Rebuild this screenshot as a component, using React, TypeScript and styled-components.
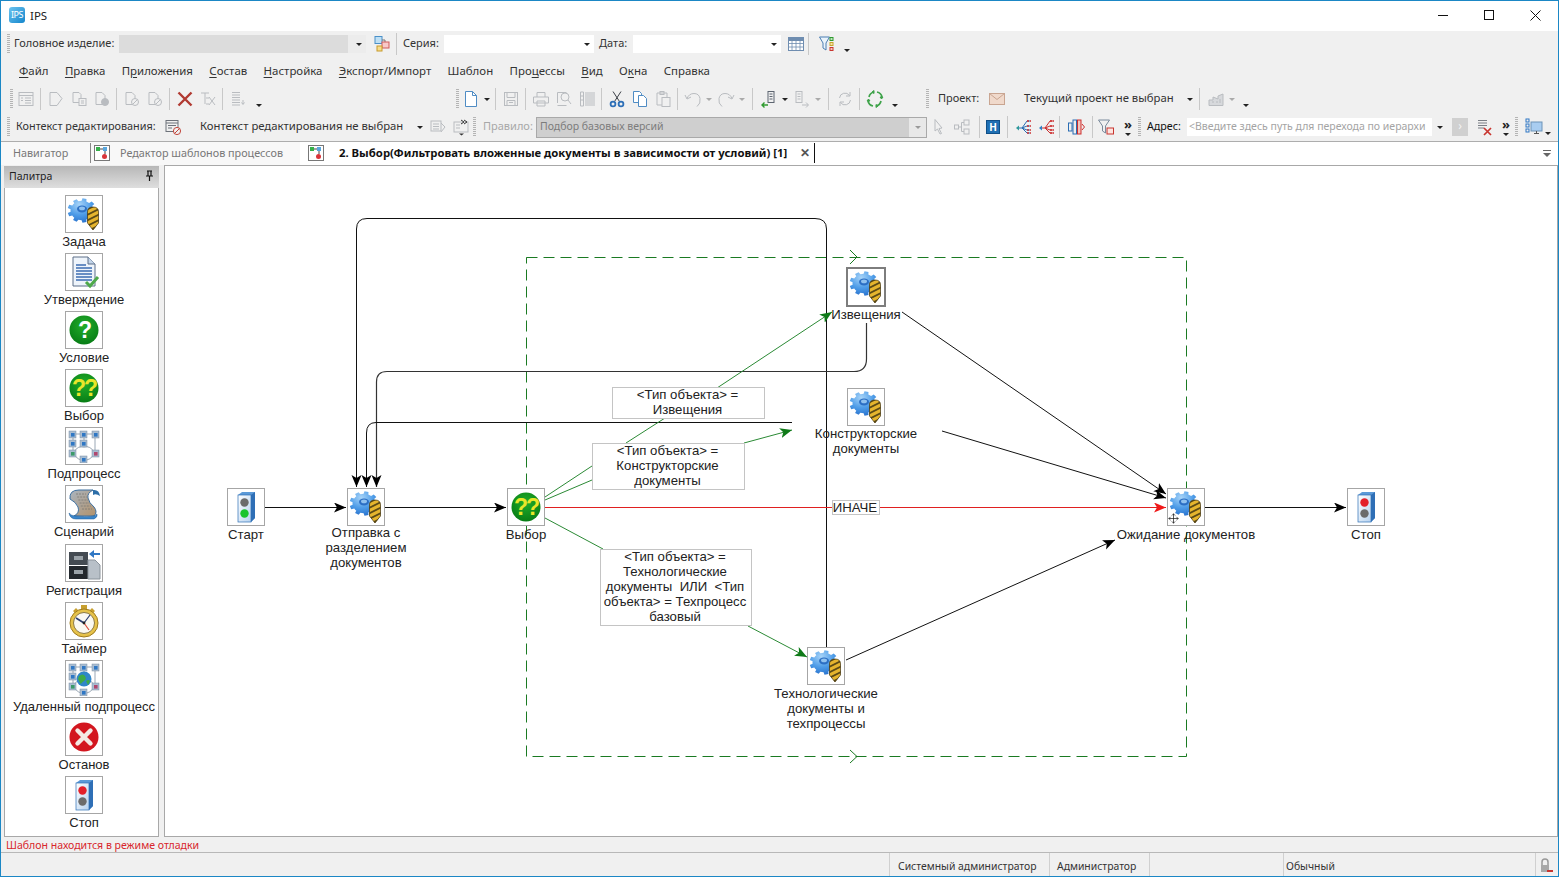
import React, { useId } from 'react';
import { createGlobalStyle, styled } from 'styled-components';
import { Move } from 'lucide-react';

const GlobalStyle = createGlobalStyle`
  html, body { margin: 0; padding: 0; background: #f0f0f0; overflow: hidden; }
  * { box-sizing: border-box; }
`;

const UI_FONT = `"Noto Sans", "Liberation Sans", sans-serif`;
const DIAGRAM_FONT = `"Liberation Sans", Arial, sans-serif`;

/* ---------- drawings ---------- */

function gearPoints(cx: number, cy: number, outer: number, inner: number, teeth: number) {
  const pts: string[] = [];
  const step = (Math.PI * 2) / teeth;
  for (let i = 0; i < teeth; i++) {
    const a = i * step;
    const add = (r: number, da: number) =>
      pts.push(`${(cx + Math.cos(a + da) * r).toFixed(2)},${(cy + Math.sin(a + da) * r * 0.84).toFixed(2)}`);
    add(inner, -step * 0.5);
    add(inner, -step * 0.3);
    add(outer, -step * 0.2);
    add(outer, step * 0.2);
    add(inner, step * 0.3);
  }
  return pts.join(' ');
}

const DRILL = 'M20.5 15q0-5 5.5-5t5.5 5v11l-5.5 7-5.5-7z';

function GearIcon() {
  const id = useId();
  return (
    <svg width="34" height="34" viewBox="0 0 34 34">
      <defs>
        <radialGradient id={id + 'g'} cx="0.4" cy="0.25" r="0.85">
          <stop offset="0" stopColor="#a6d3f8" />
          <stop offset="0.5" stopColor="#4f9de8" />
          <stop offset="1" stopColor="#2069c8" />
        </radialGradient>
        <clipPath id={id + 'c'}>
          <path d={DRILL} />
        </clipPath>
      </defs>
      <polygon points={gearPoints(15, 13.5, 14.5, 11.5, 9)} fill={`url(#${id}g)`} />
      <ellipse cx="15" cy="12" rx="5" ry="3.4" fill="#2c6fc4" />
      <ellipse cx="15" cy="11.4" rx="3" ry="1.8" fill="#8fc1ee" />
      <g clipPath={`url(#${id}c)`}>
        <rect x="19" y="9" width="14" height="25" fill="#e6b52e" />
        {[6, 11.5, 17, 22.5, 28].map((y) => (
          <line key={y} x1="19" y1={y + 7} x2="33" y2={y} stroke="#5c4a16" strokeWidth="1.9" />
        ))}
      </g>
      <path d={DRILL} fill="none" stroke="#3d3010" strokeWidth=".7" />
    </svg>
  );
}

function LightIcon({ top, bottom }: { top: string; bottom: string }) {
  const id = useId();
  return (
    <svg width="34" height="34" viewBox="0 0 34 34">
      <defs>
        <linearGradient id={id} x1="0" y1="0" x2="1" y2="1">
          <stop offset="0" stopColor="#ffffff" />
          <stop offset="1" stopColor="#b7d3f0" />
        </linearGradient>
      </defs>
      <path d="M9 5l4-3h13v26l-4 4z" fill="#5b9ad8" />
      <path d="M22 5l4-3v26l-4 4z" fill="#2f6fb6" />
      <rect x="9" y="5" width="13" height="27" fill={`url(#${id})`} stroke="#2f6fb6" strokeWidth=".7" />
      <circle cx="15.5" cy="12.5" r="4.2" fill={top} />
      <circle cx="15.5" cy="23.5" r="4.2" fill={bottom} />
    </svg>
  );
}

function QuestionIcon({ text, color }: { text: string; color: string }) {
  const id = useId();
  return (
    <svg width="32" height="32" viewBox="0 0 32 32">
      <defs>
        <radialGradient id={id} cx="0.5" cy="0.35" r="0.7">
          <stop offset="0" stopColor="#22ad2a" />
          <stop offset="1" stopColor="#067a14" />
        </radialGradient>
      </defs>
      <circle cx="16" cy="16" r="14.5" fill={`url(#${id})`} />
      <text x="16" y="24" textAnchor="middle" fontFamily={DIAGRAM_FONT} fontWeight="700" fontSize="23" fill={color} letterSpacing="-2">
        {text}
      </text>
    </svg>
  );
}

function DocIcon() {
  return (
    <svg width="34" height="34" viewBox="0 0 34 34">
      <path d="M6 2h15l7 7v22H6z" fill="#eef4fb" stroke="#5d6f88" />
      <path d="M21 2v7h7" fill="#c3d5ea" stroke="#5d6f88" />
      {[10, 13, 16, 19, 22, 25].map((y) => (
        <line key={y} x1="9" y1={y} x2={y < 13 ? 19 : 25} y2={y} stroke="#2e62ad" strokeWidth="1.4" />
      ))}
      <path d="M19 27l4 4 8-9" fill="none" stroke="#4ea94a" strokeWidth="3" />
    </svg>
  );
}

function Square({ x, y, c = '#2f77c4' }: { x: number; y: number; c?: string }) {
  return (
    <g>
      <rect x={x} y={y} width="7" height="7" fill="#a9bdd2" stroke="#7c8ea3" strokeWidth=".5" />
      <rect x={x + 2} y={y + 2} width="3.6" height="3.6" fill={c} />
    </g>
  );
}

function SubprocessIcon({ globe }: { globe?: boolean }) {
  return (
    <svg width="34" height="34" viewBox="0 0 34 34">
      <path d="M6 5H28V24M6 5V24M17 5V14M6 24Q11 16 17 18Q23 16 28 24M6 24Q11 32 17 31Q23 32 28 24" fill="none" stroke="#9aa7b5" />
      <Square x={2} y={2} />
      <Square x={13} y={2} />
      <Square x={25} y={2} />
      <Square x={2} y={11} />
      <Square x={13} y={11} />
      <Square x={2} y={21} c="#3c9a6b" />
      <Square x={25} y={21} c="#b0486e" />
      <Square x={13} y={27} />
      {globe && (
        <g>
          <circle cx="17" cy="17" r="7.5" fill="#2f86c9" />
          <path d="M12 14q4-3 6 0t-1 5-3 3-3-5zM19 19q3-2 4 0l-2 4z" fill="#3faa47" />
        </g>
      )}
    </svg>
  );
}

function ScenarioIcon() {
  const id = useId();
  return (
    <svg width="34" height="34" viewBox="0 0 34 34">
      <defs>
        <linearGradient id={id} x1="0" y1="0" x2="1" y2="1">
          <stop offset="0" stopColor="#a9b4c0" />
          <stop offset="1" stopColor="#b3926a" />
        </linearGradient>
      </defs>
      <path d="M3 12Q2 3 12 3H26Q20 6 21 11Q22 16 27 20Q31 25 27 29H7Q13 26 11 20Q9 15 3 12z" fill={`url(#${id})`} stroke="#3d6f9f" />
      {[7, 10, 13, 16, 19, 22].map((y) => (
        <line key={y} x1={9 + (y - 7) * 0.4} y1={y} x2={19 + (y - 7) * 0.4} y2={y} stroke="#7b7a74" strokeWidth=".8" strokeDasharray="2 1" />
      ))}
      <path d="M2 26Q3 32 9 32H27Q31 30 30 27Q28 31 9 29Q4 29 2 26z" fill="#3a85c9" stroke="#1f5a95" strokeWidth=".5" />
      <path d="M26 3Q32 2 33 9Q29 6 26 8z" fill="#2c6ea8" />
    </svg>
  );
}

function RegistrationIcon() {
  return (
    <svg width="34" height="34" viewBox="0 0 34 34">
      <rect x="2" y="6" width="19" height="13" fill="#444b52" />
      <rect x="2" y="20" width="19" height="13" fill="#23282d" />
      <rect x="7" y="10" width="9" height="4" fill="#9aa2a8" />
      <rect x="7" y="24" width="9" height="4" fill="#9aa2a8" />
      <path d="M21 14h7l5 5v14H21z" fill="#b8c0c8" stroke="#8b949c" />
      <path d="M33 7h-6V4l-5 4 5 4V9h6z" fill="#2f77c4" />
    </svg>
  );
}

function TimerIcon() {
  return (
    <svg width="34" height="34" viewBox="0 0 34 34">
      <rect x="14" y="1" width="6" height="4" fill="#c8a030" />
      <path d="M6 7l3-3 3 3-3 3zM28 7l-3-3-3 3 3 3z" fill="#c8a030" />
      <circle cx="17" cy="19" r="14" fill="#e6c24a" stroke="#a07c1e" />
      <circle cx="17" cy="19" r="10.5" fill="#fbf9f2" stroke="#8c7a45" />
      <path d="M17 19L9 14" stroke="#2c3e70" strokeWidth="1.6" />
      <path d="M17 19L23 11" stroke="#2c3e70" strokeWidth="1.2" />
      <path d="M17 19L22 26" stroke="#d84a3a" strokeWidth="1.2" />
      <circle cx="17" cy="19" r="1.4" fill="#222" />
    </svg>
  );
}

function HaltIcon() {
  return (
    <svg width="32" height="32" viewBox="0 0 32 32">
      <circle cx="16" cy="16" r="14.5" fill="#d3161f" />
      <path d="M9.5 9.5L22.5 22.5M22.5 9.5L9.5 22.5" stroke="#f4e9e4" strokeWidth="4.4" strokeLinecap="round" />
    </svg>
  );
}

function Ico({ children, c = '#b9bcc0' }: { children: React.ReactNode; c?: string }) {
  return (
    <svg width="18" height="18" viewBox="0 0 18 18" fill="none" stroke={c} strokeWidth="1" style={{ flexShrink: 0 }}>
      {children}
    </svg>
  );
}

const icons: Record<string, React.ReactNode> = {
  list: (
    <Ico>
      <rect x="2" y="2.5" width="14" height="13" />
      <path d="M2 5.5h14M8 8h6M8 10.5h6M8 13h6M4 8h2M4 10.5h2" />
    </Ico>
  ),
  docEdit: (
    <Ico>
      <path d="M3 2.5h7l5 6-5 7H3z" />
    </Ico>
  ),
  docs: (
    <Ico>
      <path d="M3 2.5h6l2 2v8H3z" />
      <rect x="9" y="8.5" width="7" height="7" fill="#f0f0f0" />
      <path d="M11 11h3M11 13h3" />
    </Ico>
  ),
  docCheck: (
    <Ico>
      <path d="M3 2.5h6l3 3v9H3z" />
      <circle cx="12" cy="12" r="3.5" fill="#b9bcc0" />
    </Ico>
  ),
  docNo: (
    <Ico>
      <path d="M3 2.5h6l3 3v9H3z" />
      <circle cx="12" cy="12" r="3.5" fill="#f0f0f0" />
      <path d="M9.5 14.5l5-5" />
    </Ico>
  ),
  redX: (
    <Ico c="#b13a32">
      <path d="M2.5 2.5l13 13M15.5 2.5l-13 13" strokeWidth="2.4" />
    </Ico>
  ),
  treeX: (
    <Ico>
      <path d="M2 3h8M6 3v11M7 8h3M7 14h3" />
      <path d="M10 7l6 8M16 7l-6 8" />
    </Ico>
  ),
  listDown: (
    <Ico>
      <path d="M3 2.5h8M3 5h8M3 7.5h8M3 10h8M3 12.5h8M3 15h8M14 10v4M12.5 12.5l1.5 2 1.5-2" />
    </Ico>
  ),
  newDoc: (
    <Ico c="#4f8cc4">
      <path d="M3.5 1.5h7l4 4v11h-11z" fill="#fff" />
      <path d="M10.5 1.5v4h4" />
    </Ico>
  ),
  save: (
    <Ico>
      <rect x="2.5" y="2.5" width="13" height="13" />
      <path d="M5 2.5v5h8v-5M5 15.5v-5h8v5M7 12.5h4" />
    </Ico>
  ),
  print: (
    <Ico>
      <path d="M5 7V2.5h8V7M1.5 7h15v6h-15zM5 11h8v5H5z" />
    </Ico>
  ),
  preview: (
    <Ico>
      <path d="M2.5 13V2.5h9" />
      <circle cx="10" cy="7" r="4" />
      <path d="M13 10l3 4M2.5 15.5h9" />
    </Ico>
  ),
  barcode: (
    <Ico>
      <path d="M2.5 2v14h3V2zM8 2v14M10 2v14M12 2v14M14 2v14M16 2v14" />
      <path d="M2.5 6h3M2.5 10h3" />
    </Ico>
  ),
  cut: (
    <Ico c="#3b3f46">
      <path d="M5 1.5l6.5 10M13 1.5L6.5 11.5" />
      <circle cx="5" cy="14" r="2.4" stroke="#2d6fb7" strokeWidth="1.8" />
      <circle cx="13" cy="14" r="2.4" stroke="#2d6fb7" strokeWidth="1.8" />
    </Ico>
  ),
  copy: (
    <Ico c="#4f8cc4">
      <path d="M2.5 1.5h6l2 2v9h-8z" fill="#fff" />
      <path d="M7.5 5.5h5l3 3v8h-8z" fill="#fff" />
    </Ico>
  ),
  paste: (
    <Ico>
      <path d="M3 3h10v12H3z" />
      <rect x="6" y="1.5" width="4" height="3" />
      <rect x="8" y="7.5" width="8" height="9" fill="#f0f0f0" />
    </Ico>
  ),
  undo: (
    <Ico>
      <path d="M3 8.5q2-5 7-5t6 5-3 8M1 5l2 4 4-2" />
    </Ico>
  ),
  redo: (
    <Ico>
      <path d="M15 8.5q-2-5-7-5t-6 5 3 8M17 5l-2 4-4-2" />
    </Ico>
  ),
  moveIn: (
    <Ico c="#5d6570">
      <rect x="8" y="1.5" width="6" height="11" />
      <path d="M9.5 4h3M9.5 6.5h3M9.5 9h3" />
      <path d="M8 15H2M4.5 12.5L2 15l2.5 2.5" stroke="#2f9a2f" strokeWidth="1.4" />
    </Ico>
  ),
  moveOut: (
    <Ico>
      <rect x="3" y="1.5" width="6" height="11" />
      <path d="M4.5 4h3M4.5 6.5h3M4.5 9h3M9 15h6M13 12.5l2.5 2.5-2.5 2.5" />
    </Ico>
  ),
  refresh: (
    <Ico>
      <path d="M3.5 8a5.5 5.5 0 0 1 10-2.5M14.5 10a5.5 5.5 0 0 1-10 2.5M14 2v4h-4M4 16v-4h4" />
    </Ico>
  ),
  sync: (
    <Ico c="#3fa34a">
      <path d="M3 7a6.5 6.5 0 0 1 5-5M15 11a6.5 6.5 0 0 1-5 5M11 2a6.5 6.5 0 0 1 5 5M7 16a6.5 6.5 0 0 1-5-5" strokeWidth="1.7" />
      <path d="M8 0.5v3l-2-1.5zM10 17.5v-3l2 1.5zM14 7h3l-1.5 2zM4 11H1l1.5-2z" fill="#3fa34a" />
    </Ico>
  ),
  envelope: (
    <Ico c="#c9a591">
      <rect x="1.5" y="3.5" width="15" height="11" fill="#f0d9cb" />
      <path d="M1.5 3.5l7.5 6 7.5-6" />
    </Ico>
  ),
  building: (
    <Ico>
      <path d="M2 15.5h14V4l-5 2v3l-5-2v3H2z" fill="#d7d9dc" />
      <path d="M5 12h2M9 12h2M13 9v4" />
    </Ico>
  ),
  ctxNo: (
    <Ico c="#6d727a">
      <rect x="2" y="2.5" width="12" height="11" />
      <path d="M2 5h12M4 7.5h8M4 10h4" />
      <circle cx="13" cy="13" r="3.6" stroke="#c2463c" fill="#f0f0f0" />
      <path d="M10.5 15.5l5-5" stroke="#c2463c" />
    </Ico>
  ),
  ctxArrow: (
    <Ico>
      <rect x="2" y="3" width="10" height="10" />
      <path d="M4 6h6M4 8.5h6M4 11h6M12 5l4 4-4 5" />
    </Ico>
  ),
  ctxMore: (
    <Ico>
      <rect x="2" y="4" width="14" height="10" />
      <path d="M4 7h4M4 10h4" />
      <path d="M9 2l3 2-3 2M12 2l3 2-3 2" stroke="#333" />
      <path d="M7 15.5h5l-2.5 2z" fill="#333" stroke="none" />
    </Ico>
  ),
  pointer: (
    <Ico>
      <path d="M5 1.5l7 8.5-3 .5 2.5 5-1.5.5-2.5-5L5 13z" />
    </Ico>
  ),
  graph: (
    <Ico>
      <rect x="1.5" y="7" width="4" height="4" />
      <rect x="11" y="2" width="5" height="5" />
      <rect x="11" y="11" width="5" height="5" />
      <path d="M5.5 9H8.5V4.5H11M8.5 9V13.5H11" />
    </Ico>
  ),
  treeBlue: (
    <Ico c="#2a6db3">
      <path d="M2 10h5l5-7h3M7 10l5-2h3M7 10l5 2h3M7 10l5 5h3" />
      <path d="M12 3h4M12 8h4M12 12h4M12 15h4" stroke="#cc2f2f" strokeWidth="1.6" strokeDasharray="2 1" />
      <path d="M1 10l3-2.5v5z" fill="#2f9a9a" stroke="none" />
    </Ico>
  ),
  treeRed: (
    <Ico c="#cc2f2f">
      <path d="M2 10h5l5-7h3M7 10l5-2h3M7 10l5 2h3M7 10l5 5h3" />
      <path d="M12 3h4M12 8h4M12 12h4M12 15h4" strokeWidth="1.6" strokeDasharray="2 1" />
      <path d="M1 10l3-2.5v5z" fill="#2f7fc4" stroke="none" />
    </Ico>
  ),
  columns: (
    <Ico c="#2a6db3">
      <rect x="1.5" y="5" width="3.5" height="8" />
      <rect x="6" y="2" width="3.5" height="14" />
      <rect x="10.5" y="2" width="3.5" height="14" stroke="#cc2f2f" fill="#f3c4bc" />
      <path d="M15 6l2.5 3-2.5 3" stroke="#cc2f2f" />
    </Ico>
  ),
  filterRed: (
    <Ico c="#7a8a9c">
      <path d="M1.5 2h11l-4 6v7l-3-2V8z" />
      <rect x="10" y="10" width="6.5" height="6" stroke="#c8352f" fill="#fde4e0" />
    </Ico>
  ),
  filterBlue: (
    <Ico c="#4b7fb3">
      <path d="M1.5 2h10l-3.5 6v7l-3-2V8z" fill="#eaf3fb" />
      <rect x="12" y="2.5" width="3" height="3" stroke="#2f9a2f" fill="#bfe6bf" />
      <rect x="12" y="7.5" width="3" height="3" stroke="#c8a52f" fill="#f5e2a5" />
      <rect x="12" y="12.5" width="3" height="3" stroke="#c8352f" fill="#f8c5bd" />
    </Ico>
  ),
  listX: (
    <Ico c="#7a7f86">
      <path d="M2 2.5h9M2 5h9M2 7.5h9M2 10h6" />
      <path d="M8 10l7 7M15 10l-7 7" stroke="#c8352f" strokeWidth="1.7" />
    </Ico>
  ),
  monitor: (
    <Ico c="#2f77c4">
      <rect x="6" y="4" width="11" height="9" fill="#a9cdf0" stroke="#6d93b8" />
      <path d="M9 15.5h5M11.5 13v2.5" stroke="#555" />
      <rect x="1" y="1" width="3" height="3" />
      <rect x="1" y="6" width="3" height="3" />
      <rect x="1" y="11" width="3" height="3" />
    </Ico>
  ),
  calendar: (
    <Ico c="#6f8db0">
      <rect x="1.5" y="2.5" width="15" height="13" fill="#fff" />
      <rect x="1.5" y="2.5" width="15" height="3" fill="#6f8db0" />
      <path d="M1.5 8.5h15M1.5 12h15M5 5.5v10M9 5.5v10M13 5.5v10" strokeWidth=".8" />
    </Ico>
  ),
  parts: (
    <Ico c="#4a90c8">
      <rect x="2" y="1.5" width="7" height="7" fill="#bfe0f5" />
      <path d="M9 5h3v3" stroke="#777" />
      <rect x="9" y="7" width="7" height="6" stroke="#cf5a5a" fill="#f8c9c9" />
      <rect x="4" y="11" width="5" height="5" stroke="#c79a2b" fill="#f7dd8e" />
    </Ico>
  ),
};

function SmallPin() {
  return (
    <svg width="9" height="11" viewBox="0 0 9 11">
      <path d="M2 1h5M3 1v5M6 1v5M1 6h7M4.5 6v5" stroke="#111" strokeWidth="1.2" fill="none" />
    </svg>
  );
}

/* ---------- window frame ---------- */

const Window = styled.div`
  width: 1559px;
  height: 877px;
  display: flex;
  flex-direction: column;
  border: 1px solid #1b87c5;
  background: #f0f0f0;
  font-family: ${UI_FONT};
  font-size: 11px;
  color: #222;
  overflow: hidden;
`;

const TitleBar = styled.div`
  height: 30px;
  flex: none;
  display: flex;
  align-items: center;
  padding: 0 0 2px 8px;
  background: #fff;
  font-size: 11.5px;
`;

const Logo = styled.div`
  width: 16px;
  height: 16px;
  border-radius: 3px;
  background: linear-gradient(135deg, #6cc3ef, #1386cc);
  color: #fff;
  font-size: 9px;
  line-height: 15px;
  text-align: center;
  letter-spacing: -0.5px;
  margin-right: 5px;
`;

const WindowButtons = styled.div`
  margin-left: auto;
  display: flex;
`;

const WindowButton = styled.div`
  width: 46px;
  height: 28px;
  display: flex;
  align-items: center;
  justify-content: center;
`;

/* ---------- toolbars ---------- */

const Row = styled.div<{ $h?: number; $pad: number }>`
  height: ${(p) => p.$h ?? 28}px;
  flex: none;
  display: flex;
  align-items: center;
  padding-left: ${(p) => p.$pad}px;
  white-space: nowrap;
`;

const Group = styled.div<{ $w: number }>`
  width: ${(p) => p.$w}px;
  flex: none;
  display: flex;
  align-items: center;
`;

const Grip = styled.div<{ $ml?: number }>`
  width: 4px;
  height: 20px;
  flex: none;
  margin-left: ${(p) => p.$ml ?? 0}px;
  background: repeating-linear-gradient(to bottom, #b4b4b4 0 1px, transparent 1px 2px);
  background-size: 3px 100%;
  background-repeat: no-repeat;
`;

const Btn = styled.div<{ $w?: number; $ml?: number }>`
  width: ${(p) => p.$w ?? 23}px;
  height: 22px;
  flex: none;
  margin-left: ${(p) => p.$ml ?? 0}px;
  display: flex;
  align-items: center;
  justify-content: center;
`;

const Sep = styled.div<{ $w?: number }>`
  width: ${(p) => p.$w ?? 7}px;
  height: 22px;
  flex: none;
  display: flex;
  justify-content: center;

  &::before {
    content: '';
    width: 1px;
    background: #c8c8c8;
  }
`;

const Caret = styled.div<{ $w?: number; $ml?: number; $low?: boolean; $c?: string }>`
  width: ${(p) => p.$w ?? 10}px;
  flex: none;
  margin-left: ${(p) => p.$ml ?? 0}px;
  display: flex;
  justify-content: center;
  padding-top: ${(p) => (p.$low ? 12 : 0)}px;

  &::before {
    content: '';
    border-left: 3px solid transparent;
    border-right: 3px solid transparent;
    border-top: 3px solid ${(p) => p.$c ?? '#222'};
  }
`;

const Text = styled.div<{ $w: number; $ml?: number; $c?: string; $fs?: number }>`
  width: ${(p) => p.$w}px;
  flex: none;
  margin-left: ${(p) => p.$ml ?? 0}px;
  margin-bottom: 2px;
  color: ${(p) => p.$c ?? '#333'};
  font-size: ${(p) => p.$fs ?? 11}px;
  line-height: 16px;
  overflow: visible;
`;

const Field = styled.div<{ $w: number; $ml?: number; $bg?: string }>`
  width: ${(p) => p.$w}px;
  height: 18px;
  flex: none;
  margin-left: ${(p) => p.$ml ?? 0}px;
  background: ${(p) => p.$bg ?? '#fff'};
  display: flex;
  align-items: center;
  justify-content: flex-end;
  padding-right: 2px;
  color: #a4a4a4;
  font-size: 10.5px;
`;

const FieldHint = styled.span`
  flex: 1;
  padding: 0 0 2px 2px;
`;

const Combo = styled.div`
  width: 391px;
  height: 21px;
  flex: none;
  margin-left: 4px;
  border: 1px solid #a9a9a9;
  background: #e8e8e8;
  display: flex;
  align-items: center;
  color: #7c7c7c;
  font-size: 10.5px;
`;

const ComboValue = styled.div`
  width: 372px;
  height: 19px;
  background: #cfcfcf;
  padding-left: 3px;
  line-height: 17px;
`;

const More = styled.div<{ $w: number; $ml?: number }>`
  width: ${(p) => p.$w}px;
  flex: none;
  margin-left: ${(p) => p.$ml ?? 0}px;
  display: flex;
  flex-direction: column;
  align-items: center;
  font-size: 13px;
  font-weight: 700;
  line-height: 11px;
  gap: 3px;

  &::after {
    content: '';
    border-left: 3px solid transparent;
    border-right: 3px solid transparent;
    border-top: 3px solid #222;
  }
`;

const GrayBox = styled.div`
  width: 16px;
  height: 18px;
  background: #d0d0d0;
  color: #f3f3f3;
  text-align: center;
  line-height: 16px;
  font-size: 12px;
`;

const HBadge = styled.div`
  width: 14px;
  height: 14px;
  background: #1f6fb3;
  border: 1px solid #0f4f88;
  color: #fff;
  font-weight: 700;
  font-size: 10px;
  line-height: 12px;
  text-align: center;
`;

const Menu = styled.div`
  height: 28px;
  flex: none;
  display: flex;
  align-items: center;
  gap: 16.4px;
  padding: 0 0 2px 18px;
  font-size: 11.45px;
  color: #333;

  u {
    text-underline-offset: 2px;
  }
`;

/* ---------- tabs ---------- */

const TabBar = styled.div`
  height: 24px;
  flex: none;
  display: flex;
  align-items: center;
  background: #fff;
  border-top: 1px solid #adadad;
  white-space: nowrap;
`;

const Tab = styled.div<{ $w: number; $active?: boolean }>`
  width: ${(p) => p.$w}px;
  height: 23px;
  flex: none;
  display: flex;
  align-items: center;
  padding-bottom: 2px;
  background: ${(p) => (p.$active ? '#fff' : '#f8f8f8')};
  color: ${(p) => (p.$active ? '#111' : '#777')};
  font-size: ${(p) => (p.$active ? 11.33 : 10.8)}px;
  font-weight: ${(p) => (p.$active ? 700 : 400)};
`;

const TabDivider = styled.div<{ $c: string; $push?: boolean }>`
  width: 1px;
  height: 20px;
  flex: none;
  margin-left: ${(p) => (p.$push ? 'auto' : '0')};
  background: ${(p) => p.$c};
`;

const TabIconBox = styled.div<{ $ml: number; $mr: number }>`
  width: 16px;
  height: 16px;
  flex: none;
  margin: 0 ${(p) => p.$mr}px 0 ${(p) => p.$ml}px;
  border: 1px solid #777;
  background: #fff;
  display: flex;
`;

const TabClose = styled.div`
  margin-left: auto;
  margin-right: 4px;
  font-size: 12px;
  color: #555;
`;

const TabMenu = styled.div`
  margin-left: auto;
  margin-right: 7px;
  width: 8px;
  border-top: 1px solid #666;
  display: flex;
  justify-content: center;
  padding-top: 2px;

  &::before {
    content: '';
    border-left: 4px solid transparent;
    border-right: 4px solid transparent;
    border-top: 4px solid #666;
  }
`;

/* ---------- main ---------- */

const Main = styled.div`
  flex: 1;
  min-height: 0;
  display: flex;
  gap: 5px;
  padding-left: 3px;
`;

const Palette = styled.div`
  width: 155px;
  flex: none;
  margin-top: 1px;
  display: flex;
  flex-direction: column;
`;

const PaletteHead = styled.div`
  height: 22px;
  flex: none;
  display: flex;
  align-items: center;
  justify-content: space-between;
  padding: 0 5px 3px;
  background: linear-gradient(to bottom, #b7b7b7, #dedede);
  color: #222;
  font-size: 10.5px;
`;

const PaletteBody = styled.div`
  flex: 1;
  display: flex;
  flex-direction: column;
  align-items: center;
  gap: 4.1px;
  padding: 7px 0 0 5px;
  background: #fff;
  border: 1px solid #a8a8a8;
  border-top: 0;
`;

const Item = styled.div`
  display: flex;
  flex-direction: column;
  align-items: center;
`;

const IconBox = styled.div<{ $selected?: boolean }>`
  width: ${(p) => (p.$selected ? 40 : 38)}px;
  height: ${(p) => (p.$selected ? 40 : 38)}px;
  flex: none;
  position: relative;
  background: #fff;
  border: ${(p) => (p.$selected ? '2px solid #7d7d7d' : '1px solid #a6a6a6')};
  display: flex;
  align-items: center;
  justify-content: center;
`;

const PaletteCaption = styled.div`
  margin-top: 1px;
  font-family: ${DIAGRAM_FONT};
  font-size: 13px;
  line-height: 15px;
  color: #222;
  text-align: center;
`;

const NodeCaption = styled.div<{ $lift?: number }>`
  margin-top: ${(p) => 1 - (p.$lift ?? 0)}px;
  font-family: ${DIAGRAM_FONT};
  font-size: 13.2px;
  line-height: 15px;
  color: #222;
  text-align: center;
  white-space: pre-line;
`;

const Canvas = styled.div`
  flex: 1;
  position: relative;
  background: #fff;
  border: 1px solid #a8a8a8;
  overflow: hidden;
`;

const Wires = styled.svg`
  position: absolute;
  left: 0;
  top: 0;
  width: 1389px;
  height: 670px;
`;

const NodeWrap = styled.div<{ $x: number; $y: number }>`
  position: absolute;
  left: ${(p) => p.$x - 165 - 90}px;
  top: ${(p) => p.$y - 166}px;
  width: 180px;
  display: flex;
  flex-direction: column;
  align-items: center;
`;

const EdgeLabel = styled.div<{ $x: number; $y: number; $w: number; $h: number }>`
  position: absolute;
  left: ${(p) => p.$x - 165}px;
  top: ${(p) => p.$y - 166}px;
  width: ${(p) => p.$w}px;
  height: ${(p) => p.$h}px;
  padding-right: 2px;
  background: #fff;
  box-shadow: inset 0 0 0 1px #c4c4c4;
  font-family: ${DIAGRAM_FONT};
  font-size: 13.2px;
  line-height: 15px;
  color: #222;
  text-align: center;
  white-space: pre;
`;

const DragCursor = styled.div`
  position: absolute;
  left: 0;
  bottom: 1px;
  display: flex;
  color: #111;
`;

const DebugLine = styled.div`
  height: 16px;
  flex: none;
  padding-left: 5px;
  color: #d8262c;
  font-size: 10.55px;
  line-height: 17px;
  border-bottom: 1px solid #b8b8b8;
`;

const StatusBar = styled.div`
  height: 23px;
  flex: none;
  display: flex;
  align-items: center;
  color: #333;
  font-size: 10.4px;
`;

const Pane = styled.div<{ $w: number; $pad?: number }>`
  width: ${(p) => p.$w}px;
  height: 100%;
  flex: none;
  display: flex;
  align-items: center;
  padding: 2px 0 0 ${(p) => p.$pad ?? 8}px;
  border-left: 1px solid #d0d0d0;
`;

const Spacer = styled.div<{ $w: number }>`
  width: ${(p) => p.$w}px;
  flex: none;
`;

/* ---------- data ---------- */

const paletteItems: { label: string; icon: React.ReactNode }[] = [
  { label: 'Задача', icon: <GearIcon /> },
  { label: 'Утверждение', icon: <DocIcon /> },
  { label: 'Условие', icon: <QuestionIcon text="?" color="#fff" /> },
  { label: 'Выбор', icon: <QuestionIcon text="??" color="#e9e62a" /> },
  { label: 'Подпроцесс', icon: <SubprocessIcon /> },
  { label: 'Сценарий', icon: <ScenarioIcon /> },
  { label: 'Регистрация', icon: <RegistrationIcon /> },
  { label: 'Таймер', icon: <TimerIcon /> },
  { label: 'Удаленный подпроцесс', icon: <SubprocessIcon globe /> },
  { label: 'Останов', icon: <HaltIcon /> },
  { label: 'Стоп', icon: <LightIcon top="#e3202a" bottom="#6b6b6b" /> },
];

const menuItems: [string, string, string][] = [
  ['', 'Ф', 'айл'],
  ['', 'П', 'равка'],
  ['П', 'р', 'иложения'],
  ['', 'С', 'остав'],
  ['', 'Н', 'астройка'],
  ['', 'Э', 'кспорт/Импорт'],
  ['Шаблон', '', ''],
  ['Про', 'ц', 'ессы'],
  ['', 'В', 'ид'],
  ['О', 'к', 'на'],
  ['Справка', '', ''],
];

const nodes: { cx: number; y: number; label: string; icon: React.ReactNode; selected?: boolean; drag?: boolean; lift?: number }[] = [
  { cx: 246, y: 488, label: 'Старт', icon: <LightIcon top="#6b6b6b" bottom="#18c42c" /> },
  { cx: 366, y: 488, label: 'Отправка с\nразделением\nдокументов', icon: <GearIcon />, lift: 2 },
  { cx: 526, y: 488, label: 'Выбор', icon: <QuestionIcon text="??" color="#e9e62a" /> },
  { cx: 866, y: 267, label: 'Извещения', icon: <GearIcon />, selected: true, lift: 1 },
  { cx: 866, y: 388, label: 'Конструкторские\nдокументы', icon: <GearIcon />, lift: 1 },
  { cx: 826, y: 647, label: 'Технологические\nдокументы и\nтехпроцессы', icon: <GearIcon /> },
  { cx: 1186, y: 488, label: 'Ожидание документов', icon: <GearIcon />, drag: true },
  { cx: 1366, y: 488, label: 'Стоп', icon: <LightIcon top="#e3202a" bottom="#6b6b6b" /> },
];

const edgeLabels = [
  { x: 612, y: 387, w: 153, h: 32, text: '<Тип объекта> =\nИзвещения' },
  { x: 592, y: 443, w: 153, h: 47, text: '<Тип объекта> =\nКонструкторские\nдокументы' },
  { x: 600, y: 549, w: 152, h: 77, text: '<Тип объекта> =\nТехнологические\nдокументы  ИЛИ  <Тип\nобъекта> = Техпроцесс\nбазовый' },
  { x: 832, y: 500, w: 48, h: 15, text: 'ИНАЧЕ' },
];

function Diagram() {
  return (
    <Canvas>
      <Wires viewBox="165 166 1389 670">
        <defs>
          <marker id="arrowBlack" markerUnits="userSpaceOnUse" markerWidth="13" markerHeight="11" refX="12" refY="5" orient="auto">
            <path d="M0 0L12 5L0 10L3 5z" fill="#000" />
          </marker>
          <marker id="arrowGreen" markerUnits="userSpaceOnUse" markerWidth="13" markerHeight="11" refX="12" refY="5" orient="auto">
            <path d="M0 0L12 5L0 10L3 5z" fill="#0f7a18" />
          </marker>
          <marker id="arrowRed" markerUnits="userSpaceOnUse" markerWidth="13" markerHeight="11" refX="12" refY="5" orient="auto">
            <path d="M0 0L12 5L0 10L3 5z" fill="#f01818" />
          </marker>
        </defs>

        <g fill="none" stroke="#1a7a22" strokeWidth="1">
          <path d="M526.5 257.5H1186.5V756.5H526.5z" strokeDasharray="11 6" />
          <path d="M850 250L857 257L850 264M850 750L857 756.5L850 763" />
        </g>

        <g fill="none" stroke="#111" strokeWidth="1" markerEnd="url(#arrowBlack)">
          <path d="M265 507.5H346" />
          <path d="M385 507.5H506" />
          <path d="M1205 507.5H1346" />
          <path d="M826.5 647V229Q826.5 218.5 815 218.5H367Q356.5 218.5 356.5 229V487" />
          <path d="M866.5 323V359Q866.5 371.5 854 371.5H387Q376.5 371.5 376.5 382V487" stroke="#333" strokeWidth="1.2" />
          <path d="M792 422.5H376Q366.5 422.5 366.5 433V487" />
          <path d="M902 312L1166 494" />
          <path d="M942 431L1166 498" />
          <path d="M846 660L1115 540" />
        </g>

        <g fill="none" stroke="#2b8a35" strokeWidth="1">
          <path d="M545 497L592 466" />
          <path d="M545 500L592 480" />
          <path d="M744 443L792 430" markerEnd="url(#arrowGreen)" />
          <path d="M626 443L665 418" />
          <path d="M717 388L832 312" markerEnd="url(#arrowGreen)" />
          <path d="M545 518L603 549" />
          <path d="M748 626L807 657" markerEnd="url(#arrowGreen)" />
        </g>

        <path d="M545 507.5H832" stroke="#e02020" strokeWidth="1" />
        <path d="M880 507.5H1166" stroke="#e02020" strokeWidth="1" fill="none" markerEnd="url(#arrowRed)" />
      </Wires>

      {nodes.map((n) => (
        <NodeWrap key={n.label} $x={n.cx} $y={n.y}>
          <IconBox $selected={n.selected}>
            {n.icon}
            {n.drag && (
              <DragCursor>
                <Move size={11} strokeWidth={1.5} />
              </DragCursor>
            )}
          </IconBox>
          <NodeCaption $lift={n.lift}>{n.label}</NodeCaption>
        </NodeWrap>
      ))}

      {edgeLabels.map((l) => (
        <EdgeLabel key={l.text} $x={l.x} $y={l.y} $w={l.w} $h={l.h}>
          {l.text}
        </EdgeLabel>
      ))}
    </Canvas>
  );
}

function TabProcessIcon() {
  return (
    <svg width="14" height="14" viewBox="0 0 14 14">
      <rect x="1" y="1" width="4" height="4" fill="#35b04a" />
      <rect x="8" y="1" width="4" height="4" fill="#58a6dd" />
      <rect x="7" y="8" width="5" height="5" rx="2.5" fill="#d8343a" />
      <path d="M5 3H8M10 5V8" stroke="#444" />
    </svg>
  );
}

export default function App() {
  return (
    <>
      <GlobalStyle />
      <Window>
        <TitleBar>
          <Logo>IPS</Logo>
          IPS
          <WindowButtons>
            <WindowButton>
              <svg width="11" height="11" viewBox="0 0 11 11">
                <path d="M0 5.5H10" stroke="#111" />
              </svg>
            </WindowButton>
            <WindowButton>
              <svg width="11" height="11" viewBox="0 0 11 11">
                <rect x="0.5" y="0.5" width="9" height="9" fill="none" stroke="#111" />
              </svg>
            </WindowButton>
            <WindowButton>
              <svg width="11" height="11" viewBox="0 0 11 11">
                <path d="M0.5 0.5L10.5 10.5M10.5 0.5L0.5 10.5" stroke="#111" />
              </svg>
            </WindowButton>
          </WindowButtons>
        </TitleBar>

        <Row $h={26} $pad={6}>
          <Grip />
          <Text $w={99} $ml={3}>Головное изделие:</Text>
          <Field $w={229} $ml={6} $bg="#dcdcdc" />
          <Field $w={18} $bg="#ececec">
            <Caret />
          </Field>
          <Btn $ml={4}>{icons.parts}</Btn>
          <Sep $w={6} />
          <Text $w={36} $ml={4}>Серия:</Text>
          <Field $w={150} $ml={5}>
            <Caret />
          </Field>
          <Text $w={29} $ml={5}>Дата:</Text>
          <Field $w={148} $ml={5}>
            <Caret />
          </Field>
          <Btn $ml={3}>{icons.calendar}</Btn>
          <Sep $w={2} />
          <Btn $ml={6}>{icons.filterBlue}</Btn>
          <Caret $w={18} $low />
        </Row>

        <Menu>
          {menuItems.map(([a, u, b]) => (
            <span key={a + u + b}>
              {a}
              {u && <u>{u}</u>}
              {b}
            </span>
          ))}
        </Menu>

        <Row $pad={9}>
          <Group $w={446}>
            <Grip />
            <Btn>{icons.list}</Btn>
            <Sep />
            <Btn>{icons.docEdit}</Btn>
            <Btn>{icons.docs}</Btn>
            <Btn>{icons.docCheck}</Btn>
            <Sep />
            <Btn>{icons.docNo}</Btn>
            <Btn>{icons.docNo}</Btn>
            <Sep />
            <Btn>{icons.redX}</Btn>
            <Btn>{icons.treeX}</Btn>
            <Sep />
            <Btn>{icons.listDown}</Btn>
            <Caret $w={20} $low />
          </Group>
          <Group $w={470}>
            <Grip />
            <Btn $ml={-1}>{icons.newDoc}</Btn>
            <Caret />
            <Sep />
            <Btn>{icons.save}</Btn>
            <Sep />
            <Btn>{icons.print}</Btn>
            <Btn>{icons.preview}</Btn>
            <Btn>{icons.barcode}</Btn>
            <Sep />
            <Btn>{icons.cut}</Btn>
            <Btn>{icons.copy}</Btn>
            <Btn>{icons.paste}</Btn>
            <Sep />
            <Btn>{icons.undo}</Btn>
            <Caret $c="#aaa" />
            <Btn>{icons.redo}</Btn>
            <Caret $c="#aaa" />
            <Sep $w={10} />
            <Btn>{icons.moveIn}</Btn>
            <Caret />
            <Btn>{icons.moveOut}</Btn>
            <Caret $c="#aaa" />
            <Sep $w={10} />
            <Btn>{icons.refresh}</Btn>
            <Sep />
            <Btn>{icons.sync}</Btn>
            <Caret $w={18} $low />
          </Group>
          <Group $w={330}>
            <Grip />
            <Text $w={42} $ml={8}>Проект:</Text>
            <Btn $ml={5}>{icons.envelope}</Btn>
            <Text $w={150} $ml={16} $fs={11.3}>Текущий проект не выбран</Text>
            <Caret $ml={11} />
            <Sep $w={9} />
            <Btn>{icons.building}</Btn>
            <Caret $c="#aaa" />
            <Caret $w={18} $low />
          </Group>
        </Row>

        <Row $pad={6}>
          <Grip />
          <Text $w={140} $ml={5} $fs={10.85}>Контекст редактирования:</Text>
          <Btn $ml={5}>{icons.ctxNo}</Btn>
          <Text $w={203} $ml={16} $fs={11.3}>Контекст редактирования не выбран</Text>
          <Caret $ml={12} />
          <Btn $ml={1}>{icons.ctxArrow}</Btn>
          <Btn>{icons.ctxMore}</Btn>
          <Grip $ml={1} />
          <Text $w={49} $ml={6} $c="#a8a8a8">Правило:</Text>
          <Combo>
            <ComboValue>Подбор базовых версий</ComboValue>
            <Caret $w={17} $c="#999" />
          </Combo>
          <Btn>{icons.pointer}</Btn>
          <Btn>{icons.graph}</Btn>
          <Sep $w={12} />
          <Btn $w={16}>
            <HBadge>H</HBadge>
          </Btn>
          <Sep $w={12} />
          <Btn $w={22}>{icons.treeBlue}</Btn>
          <Btn $w={23}>{icons.treeRed}</Btn>
          <Sep $w={2} />
          <Btn $w={32}>{icons.columns}</Btn>
          <Sep $w={1} />
          <Btn $w={25}>{icons.filterRed}</Btn>
          <More $w={20}>»</More>
          <Grip />
          <Text $w={34} $ml={5} $c="#111" $fs={10.7}>Адрес:</Text>
          <Field $w={245} $ml={6}>
            <FieldHint>{'<Введите здесь путь для перехода по иерархи'}</FieldHint>
          </Field>
          <Caret $w={16} />
          <Btn $w={22} $ml={1}>
            <GrayBox>›</GrayBox>
          </Btn>
          <Btn $w={28}>{icons.listX}</Btn>
          <More $w={14}>»</More>
          <Grip $ml={2} />
          <Btn $w={22} $ml={4}>{icons.monitor}</Btn>
          <Caret $w={6} $low />
        </Row>

        <TabBar>
          <Tab $w={90}>
            <Spacer $w={12} />
            Навигатор
            <TabDivider $c="#888" $push />
          </Tab>
          <Tab $w={209}>
            <TabIconBox $ml={3} $mr={10}>
              <TabProcessIcon />
            </TabIconBox>
            Редактор шаблонов процессов
          </Tab>
          <Tab $w={515} $active>
            <TabIconBox $ml={8} $mr={15}>
              <TabProcessIcon />
            </TabIconBox>
            2. Выбор(Фильтровать вложенные документы в зависимости от условий) [1]
            <TabClose>✕</TabClose>
            <TabDivider $c="#111" />
          </Tab>
          <TabMenu />
        </TabBar>

        <Main>
          <Palette>
            <PaletteHead>
              Палитра
              <SmallPin />
            </PaletteHead>
            <PaletteBody>
              {paletteItems.map((it) => (
                <Item key={it.label}>
                  <IconBox>{it.icon}</IconBox>
                  <PaletteCaption>{it.label}</PaletteCaption>
                </Item>
              ))}
            </PaletteBody>
          </Palette>
          <Diagram />
        </Main>

        <DebugLine>Шаблон находится в режиме отладки</DebugLine>

        <StatusBar>
          <Spacer $w={888} />
          <Pane $w={160}>Системный администратор</Pane>
          <Pane $w={100} $pad={7}>Администратор</Pane>
          <Pane $w={134} $pad={3} />
          <Pane $w={252} $pad={2}>Обычный</Pane>
          <Pane $w={22} $pad={3}>
            <svg width="14" height="16" viewBox="0 0 14 16">
              <path d="M3 8V4a3 3 0 0 1 6 0v4" fill="none" stroke="#999" strokeWidth="1.5" />
              <rect x="2" y="7" width="8" height="7" fill="#a8a8a8" />
              <rect x="8" y="12" width="6" height="2" fill="#c8352f" />
            </svg>
          </Pane>
        </StatusBar>
      </Window>
    </>
  );
}
